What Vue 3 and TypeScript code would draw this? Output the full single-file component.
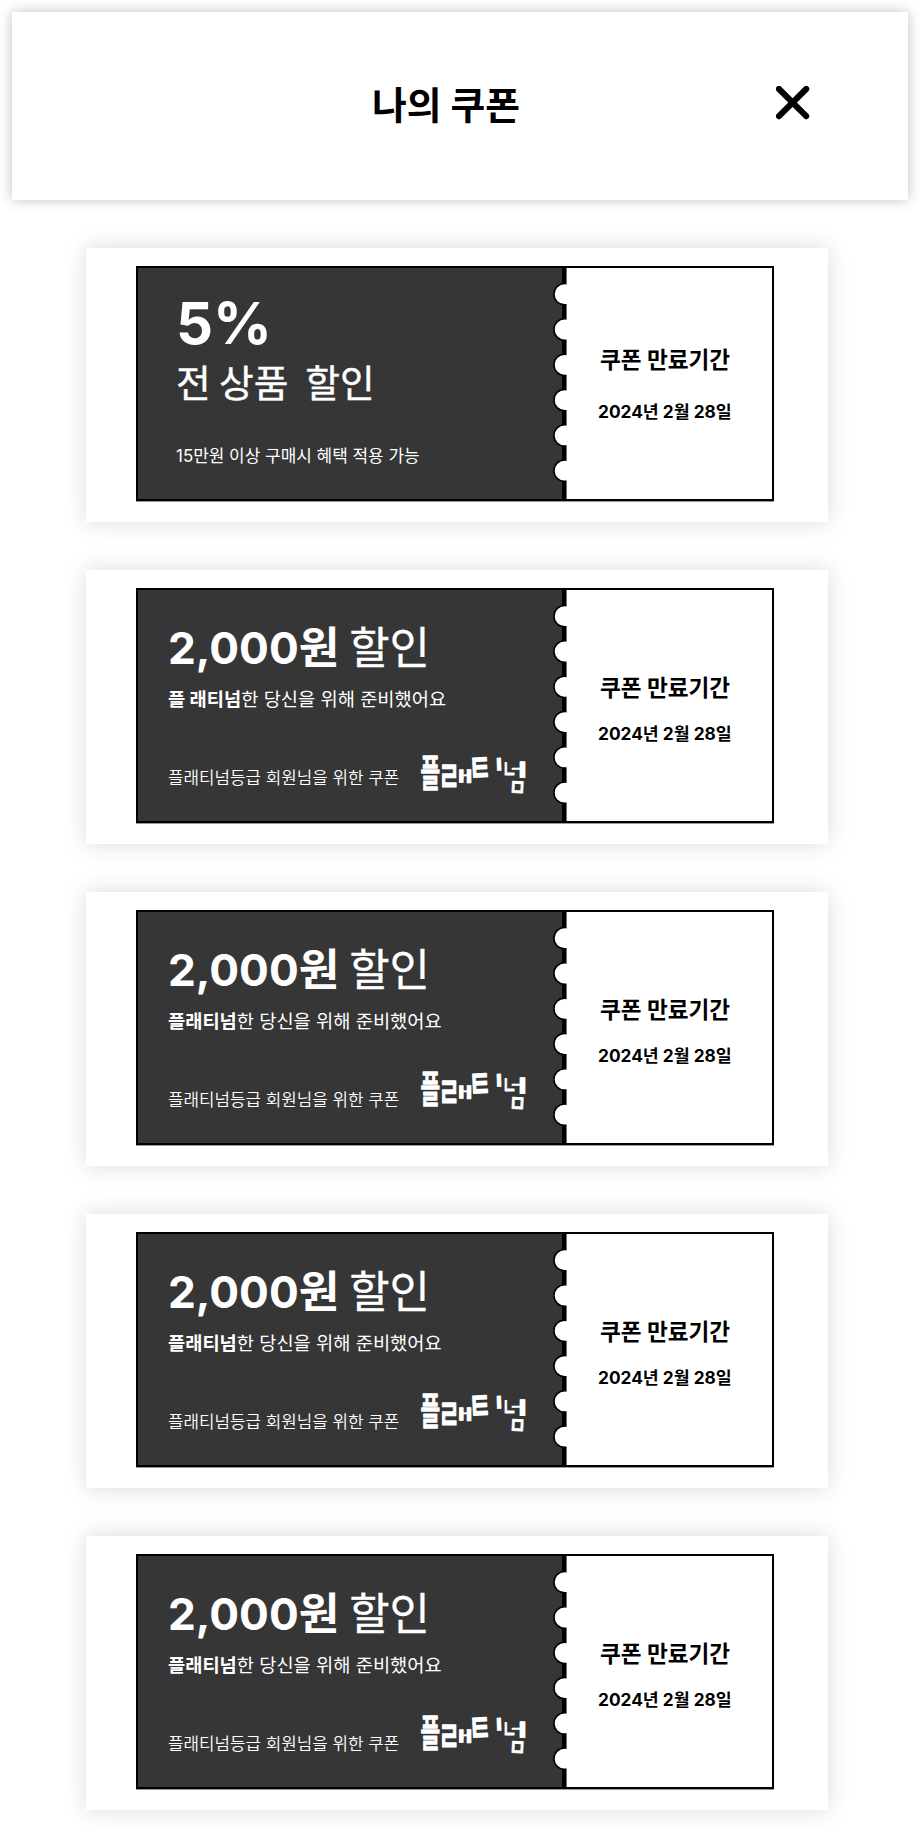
<script setup lang="ts">
interface Coupon {
  id: number
  kind: 'rate' | 'platinum'
  lead: string
  rest: string
  loose?: boolean
}

const coupons: Coupon[] = [
  { id: 1, kind: 'rate', lead: '', rest: '' },
  { id: 2, kind: 'platinum', lead: '플 래티넘', rest: '한 당신을 위해 준비했어요', loose: true },
  { id: 3, kind: 'platinum', lead: '플래티넘', rest: '한 당신을 위해 준비했어요' },
  { id: 4, kind: 'platinum', lead: '플래티넘', rest: '한 당신을 위해 준비했어요' },
  { id: 5, kind: 'platinum', lead: '플래티넘', rest: '한 당신을 위해 준비했어요' },
]

const notches: number[] = [0, 1, 2, 3, 4, 5].map((i) => 26.2 + i * 35.3)

// Hand-lettered signature: each letter has its own place, tilt and stretch.
const letters: { t: string; at: string }[] = [
  { t: '플', at: 'translate(.4 29.8) scale(.71 1.24)' },
  { t: 'ㄹ', at: 'translate(18.5 35) scale(.77 1.4)' },
  { t: 'ㅐ', at: 'translate(30.1 23.5) scale(1.08 .47)' },
  { t: 'ㅌ', at: 'translate(49.5 25.5) rotate(-3) scale(.81 1.29)' },
  { t: 'ㅣ', at: 'translate(65.2 13.1) rotate(-2) scale(1 .47)' },
  { t: 'ㄴ', at: 'translate(82.2 21.2) scale(.52 .82)' },
  { t: 'ㅓ', at: 'translate(80.9 18.7) scale(1.3 .56)' },
  { t: 'ㅁ', at: 'translate(88.6 38.4) rotate(3) scale(.62 .78)' },
]
</script>

<template>
  <main class="page">
    <header class="top">
      <h1 class="title">나의 쿠폰</h1>
      <button class="close" aria-label="닫기">
        <svg width="34" height="34" viewBox="0 0 34 34">
          <path d="M3 3L30.2 30.2M30.2 3L3 30.2" stroke="#000" stroke-width="6.1" stroke-linecap="round" />
        </svg>
      </button>
    </header>

    <section v-for="c in coupons" :key="c.id" class="card">
      <div class="ticket">
        <div v-if="c.kind === 'rate'" class="body rate">
          <strong class="percent">5%</strong>
          <p class="scope">전 상품&nbsp; 할인</p>
          <p class="note">15만원 이상 구매시 혜택 적용 가능</p>
        </div>
        <div v-else class="body platinum">
          <p class="amount"><b>2,000원</b><span class="off"> 할인</span></p>
          <p class="message"><b>{{ c.lead }}</b>{{ c.rest }}</p>
          <div class="foot">
            <p class="grade">플래티넘등급 회원님을 위한 쿠폰</p>
            <svg class="sign" :class="{ low: c.loose }" width="108" height="42" viewBox="0 0 108 42" aria-label="플래티넘">
              <text v-for="(l, i) in letters" :key="i" class="ink" :transform="l.at">{{ l.t }}</text>
            </svg>
          </div>
        </div>
        <svg class="tear" width="15" height="231" viewBox="0 0 15 231">
          <rect x="10" y="0" width="4.6" height="231" fill="#000" />
          <circle v-for="y in notches" :key="y" cx="12.6" :cy="y" r="10.7" fill="#fff" stroke="#000" stroke-width="1.6" />
          <rect x="14.6" y="0" width="1" height="231" fill="#fff" />
        </svg>
        <div class="stub" :class="{ wide: c.kind === 'rate' }">
          <h2 class="expiry">쿠폰 만료기간</h2>
          <p class="date">2024년 2월 28일</p>
        </div>
      </div>
    </section>
  </main>
</template>

<style>
html,
body {
  margin: 0;
  background: #fff;
}
</style>

<style scoped>
.page {
  box-sizing: border-box;
  width: 920px;
  height: 1830px;
  padding: 12px;
  overflow: hidden;
  display: flex;
  flex-direction: column;
  color: #000;
  font-family: Inter, 'Noto Sans CJK KR', sans-serif;
}
p,
h1,
h2 {
  margin: 0;
  white-space: nowrap;
}
.top {
  flex: none;
  display: flex;
  align-items: flex-start;
  height: 188px;
  margin-bottom: 48px;
  background: #fff;
  box-shadow: 0 0 12px rgba(0, 0, 0, 0.25);
}
.title {
  margin: 65px 0 0 360px;
  font-size: 37.8px;
  line-height: 56px;
  font-weight: 700;
}
.close {
  margin: 74px 98px 0 auto;
  padding: 0;
  border: 0;
  background: none;
}
.close svg {
  display: block;
}
.card {
  flex: none;
  box-sizing: border-box;
  width: 742px;
  height: 274px;
  margin: 0 0 48px 74px;
  padding: 18px 0 0 50px;
  background: #fff;
  box-shadow: 0 0 22px rgba(0, 0, 0, 0.15);
}
.ticket {
  box-sizing: border-box;
  display: flex;
  width: 638px;
  height: 235px;
  border: 2px solid #000;
  background: #fff;
  box-shadow: 0 1px 0 #999;
}
.body {
  box-sizing: border-box;
  width: 414px;
  background: #363636;
  color: #fff;
}
.tear {
  display: block;
  flex: none;
  background: #363636;
}
.rate {
  padding: 19px 0 0 38px;
}
.percent {
  display: block;
  font-size: 58px;
  line-height: 72px;
  font-weight: 700;
}
.scope {
  margin: -3px 0 0 0;
  font-family: 'Noto Sans CJK KR', sans-serif;
  font-size: 37.7px;
  line-height: 50px;
  font-weight: 400;
  -webkit-text-stroke: 0.4px #fff;
}
.note {
  margin-top: 38px;
  font-size: 16.95px;
  line-height: 24px;
  font-weight: 400;
}
.platinum {
  padding: 28px 0 0 30px;
}
.amount {
  font-size: 44.2px;
  line-height: 60px;
}
.off {
  font-family: 'Noto Sans CJK KR', sans-serif;
  font-size: 43.9px;
  line-height: 0;
  -webkit-text-stroke: 0.3px #fff;
}
.message {
  margin-top: 8px;
  font-size: 18.7px;
  line-height: 28px;
}
.foot {
  display: flex;
  height: 60px;
  margin-top: 32px;
}
.grade {
  width: 252px;
  padding-top: 20px;
  font-size: 16.85px;
  line-height: 24px;
  font-weight: 350;
}
.sign {
  flex: none;
  margin-top: 5px;
  overflow: visible;
}
.sign.low {
  margin-top: 11px;
}
.ink {
  fill: #fff;
  stroke: #fff;
  stroke-width: 1.2;
  stroke-linejoin: round;
  font-family: 'Noto Sans CJK KR', sans-serif;
  font-size: 30px;
  font-weight: 500;
}
.stub {
  flex: 1;
  display: flex;
  flex-direction: column;
  padding: 81px 0 0 32px;
  gap: 16px;
}
.stub.wide {
  padding-top: 75px;
  gap: 22px;
}
.expiry {
  margin-left: 1px;
  font-size: 22.6px;
  line-height: 34px;
  font-weight: 700;
}
.date {
  margin-left: -1px;
  font-size: 17.3px;
  line-height: 26px;
  font-weight: 700;
}
</style>
